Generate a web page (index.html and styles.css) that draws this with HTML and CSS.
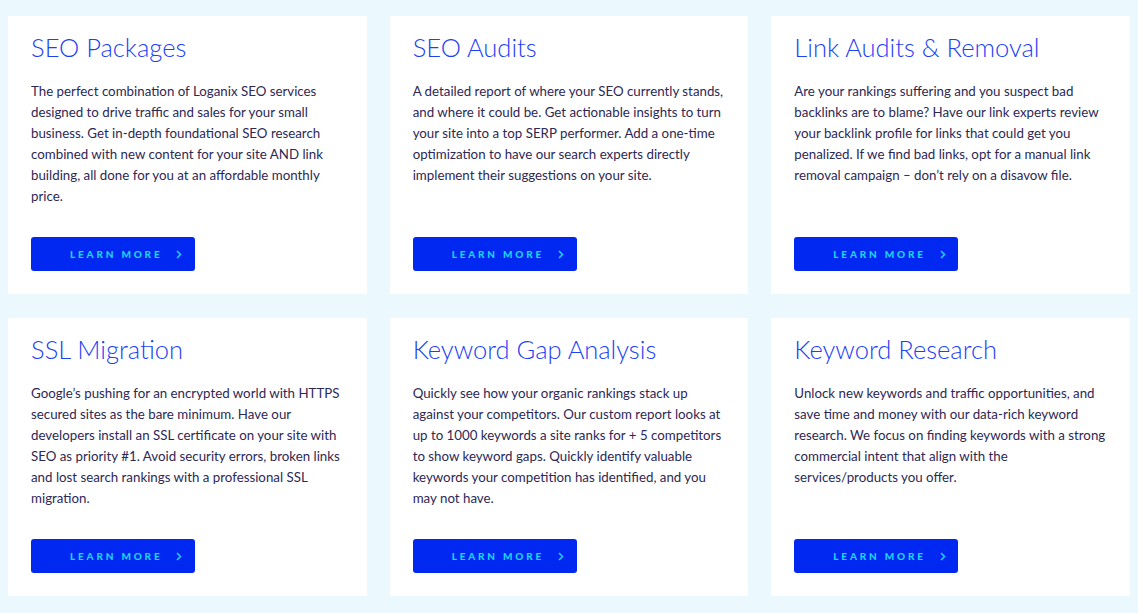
FILE: index.html
```html
<!DOCTYPE html>
<html lang="en">
<head>
  <meta charset="UTF-8" />
  <title>Loganix Services</title>
  <link rel="stylesheet" href="styles.css">
</head>
<body>
  <div id="services">

    <div class="card">
      <h2>SEO Packages</h2>
      <p>The perfect combination of Loganix SEO services designed to drive traffic and sales for your small business. Get in-depth foundational SEO research combined with new content for your site AND link building, all done for you at an affordable monthly price.</p>
      <a class="learn" href="#">LEARN MORE <svg viewBox="0 0 6 9" width="6" height="9"><path d="M1 1l3.5 3.5L1 8" /></svg></a>
    </div>

    <div class="card">
      <h2>SEO Audits</h2>
      <p>A detailed report of where your SEO currently stands, and where it could be. Get actionable insights to turn your site into a top SERP performer. Add a one-time optimization to have our search experts directly implement their suggestions on your site.</p>
      <a class="learn" href="#">LEARN MORE <svg viewBox="0 0 6 9" width="6" height="9"><path d="M1 1l3.5 3.5L1 8" /></svg></a>
    </div>

    <div class="card">
      <h2>Link Audits &amp; Removal</h2>
      <p>Are your rankings suffering and you suspect bad backlinks are to blame? Have our link experts review your backlink profile for links that could get you penalized. If we find bad links, opt for a manual link removal campaign – don’t rely on a disavow file.</p>
      <a class="learn" href="#">LEARN MORE <svg viewBox="0 0 6 9" width="6" height="9"><path d="M1 1l3.5 3.5L1 8" /></svg></a>
    </div>

    <div class="card">
      <h2>SSL Migration</h2>
      <p>Google’s pushing for an encrypted world with HTTPS secured sites as the bare minimum. Have our developers install an SSL certificate on your site with SEO as priority #1. Avoid security errors, broken links and lost search rankings with a professional SSL migration.</p>
      <a class="learn" href="#">LEARN MORE <svg viewBox="0 0 6 9" width="6" height="9"><path d="M1 1l3.5 3.5L1 8" /></svg></a>
    </div>

    <div class="card">
      <h2>Keyword Gap Analysis</h2>
      <p>Quickly see how your organic rankings stack up against your competitors. Our custom report looks at up to 1000 keywords a site ranks for + 5 competitors to show keyword gaps. Quickly identify valuable keywords your competition has identified, and you may not have.</p>
      <a class="learn" href="#">LEARN MORE <svg viewBox="0 0 6 9" width="6" height="9"><path d="M1 1l3.5 3.5L1 8" /></svg></a>
    </div>

    <div class="card">
      <h2>Keyword Research</h2>
      <p>Unlock new keywords and traffic opportunities, and save time and money with our data-rich keyword research. We focus on finding keywords with a strong commercial intent that align with the services/products you offer.</p>
      <a class="learn" href="#">LEARN MORE <svg viewBox="0 0 6 9" width="6" height="9"><path d="M1 1l3.5 3.5L1 8" /></svg></a>
    </div>

  </div>
</body>
</html>
```

FILE: styles.css
```css
body {
  margin: 0;
  background: #ebf8fd;
  font-family: 'Lato', 'Liberation Sans', sans-serif;
}

#services {
  display: grid;
  grid-template-columns: repeat(3, 1fr);
  gap: 24px 23px;
  padding: 16px 8px;
}

.card {
  background: #fff;
  height: 278px;
  box-sizing: border-box;
  padding: 15px 20px 23px 23px;
  display: flex;
  flex-direction: column;
  align-items: flex-start;
}

.card h2 {
  margin: 0;
  font-size: 25.5px;
  font-weight: 300;
  color: #1d3ff5;
  line-height: 32px;
}

.card p {
  margin: 18px 0 0;
  font-size: 13.3px;
  line-height: 21px;
  color: #2d2855;
}

.learn {
  margin-top: auto;
  width: 164px;
  height: 34px;
  box-sizing: border-box;
  padding-left: 39px;
  display: flex;
  align-items: center;
  background: #0028f0;
  border-radius: 3px;
  color: #1ad6fa;
  text-decoration: none;
  font-size: 10px;
  font-weight: 900;
  letter-spacing: 2.8px;
}

.learn svg {
  margin-left: 14px;
  fill: none;
  stroke: #1ad6fa;
  stroke-width: 1.5;
}
```
